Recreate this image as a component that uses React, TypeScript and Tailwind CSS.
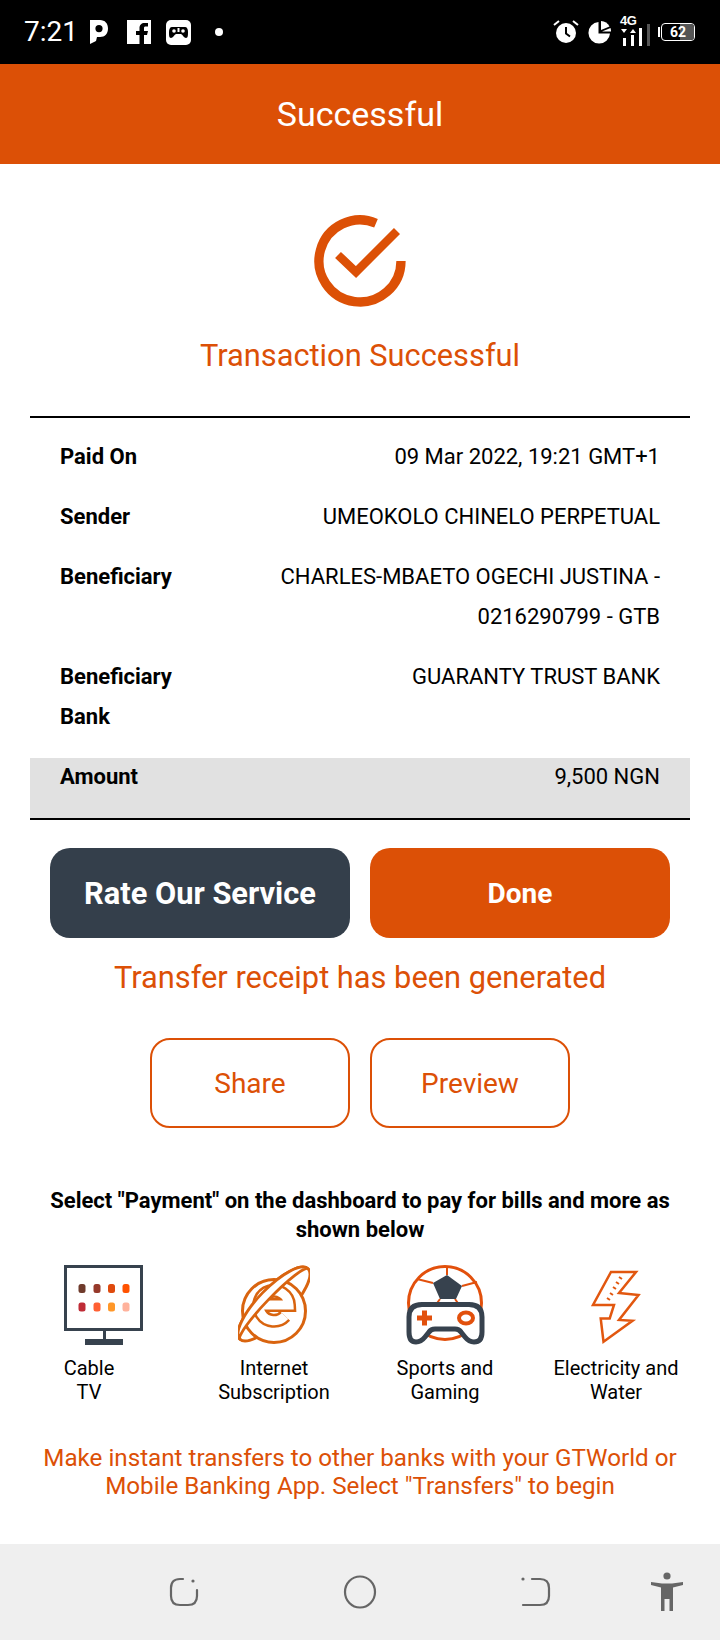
import React from 'react';

const rows = [
  { label: 'Paid On', value: '09 Mar 2022, 19:21 GMT+1' },
  { label: 'Sender', value: 'UMEOKOLO CHINELO PERPETUAL' },
  { label: 'Beneficiary', value: 'CHARLES-MBAETO OGECHI JUSTINA - 0216290799 - GTB' },
  { label: 'Beneficiary Bank', value: 'GUARANTY TRUST BANK' },
];

const StatusBar = () => (
  <div className="h-[64px] bg-black flex items-center pl-[24px] pr-[25px] text-white shrink-0">
    <span className="text-[28px] leading-none w-[66px]">7:21</span>
    <svg width="18" height="24" viewBox="0 0 18 24">
      <path fillRule="evenodd" fill="#fff" d="M0 0H10C15 0 18 3.5 18 8.5S15 17 10 17H7L6 21L0 24ZM9 5A3.6 3.6 0 1 0 9 12.2A3.6 3.6 0 1 0 9 5Z" />
    </svg>
    <svg width="24" height="24" viewBox="0 0 24 24" className="ml-[19px]">
      <path fillRule="evenodd" fill="#fff" d="M0 0H24V24H17V15H20L21 11H17V8C17 7 17.5 6.5 18.5 6.5H21V3H17.5C14.5 3 12.5 5 12.5 8V11H9V15H12.5V24H0Z" />
    </svg>
    <svg width="25" height="25" viewBox="0 0 25 25" className="ml-[15px]">
      <rect width="25" height="25" rx="5" fill="#fff" />
      <path fill="#000" d="M6 7H19C21 7 22 9 22 12C22 15 22 18 20 18C18 18 17 15 15 14H10C8 15 7 18 5 18C3 18 3 15 3 12C3 9 4 7 6 7Z" />
      <circle cx="8" cy="11" r="1.8" fill="#fff" />
      <circle cx="17" cy="11" r="1.8" fill="#fff" />
      <rect x="11.5" y="8" width="2" height="4" fill="#fff" />
    </svg>
    <span className="ml-[24px] w-[8px] h-[8px] rounded-full bg-white" />
    <div className="ml-auto flex items-center">
      <svg width="26" height="26" viewBox="0 0 26 26">
        <circle cx="13" cy="14" r="10" fill="#fff" />
        <path d="M13 8V14.5L17 17.5" fill="none" stroke="#000" strokeWidth="2" />
        <path d="M1 6L6 2M25 6L20 2" stroke="#fff" strokeWidth="2" />
      </svg>
      <svg width="24" height="24" viewBox="0 0 24 24" className="ml-[9px]">
        <path fill="#fff" d="M10.5 2V13.5H22A10.8 10.8 0 1 1 10.5 2Z" />
        <path fill="#fff" d="M13 1A10 10 0 0 1 21.5 6.5L13 10Z" />
        <path fill="#fff" d="M14 11.5L22.5 8A10 10 0 0 1 23 11.5Z" />
      </svg>
      <div className="ml-[8px] w-[39px] h-[28px] relative">
        <span className="absolute left-0 top-[-4px] text-[13px] leading-[13px] font-bold font-['Liberation_Sans',sans-serif] tracking-[-0.5px]">4G</span>
        <svg width="32" height="28" viewBox="0 0 32 28" className="absolute left-0 top-0">
          <path d="M1 11H7L4 15ZM10 15H16L13 11Z" fill="#fff" />
          <rect x="3" y="20" width="3" height="8" fill="#fff" />
          <rect x="11" y="17" width="3" height="11" fill="#fff" />
          <rect x="19" y="10" width="3" height="18" fill="#fff" />
          <rect x="27" y="6" width="3" height="22" fill="#555" />
        </svg>
      </div>
      <span className="w-[2px] h-[10px] bg-white -ml-[1px]" />
      <div className="w-[34px] ml-[1px] h-[18px] rounded-[4px] border-[1.5px] border-white relative overflow-hidden flex items-center justify-center">
        <div className="absolute right-0 top-0 bottom-0 w-[14px] bg-[#555]" />
        <span className="relative text-[14px] leading-none font-bold">62</span>
      </div>
    </div>
  </div>
);

const CheckMark = () => (
  <svg width="100" height="100" viewBox="0 0 100 100">
    <path d="M91 50A41 41 0 1 1 66 12.2" fill="none" stroke="#dc5006" strokeWidth="9.3" />
    <path d="M28 44L46 61L87 20" fill="none" stroke="#dc5006" strokeWidth="8.5" />
  </svg>
);

const TvIcon = () => (
  <svg width="80" height="80" viewBox="0 0 80 80" className="ml-[30px]">
    <rect x="1.5" y="1.5" width="76" height="63" fill="none" stroke="#37424e" strokeWidth="3" />
    <rect x="39" y="65" width="3" height="10" fill="#37424e" />
    <rect x="21" y="74" width="38" height="6" fill="#37424e" />
    <rect x="14.5" y="19" width="7" height="9" rx="2.5" fill="#6f3b2c" />
    <rect x="29.5" y="19" width="7" height="9" rx="2.5" fill="#96392a" />
    <rect x="44" y="19" width="7" height="9" rx="2.5" fill="#df4a0d" />
    <rect x="58.5" y="19" width="7" height="9" rx="2.5" fill="#ff5200" />
    <rect x="14.5" y="37.5" width="7" height="9" rx="2.5" fill="#bf2c36" />
    <rect x="29.5" y="37.5" width="7" height="9" rx="2.5" fill="#ff6033" />
    <rect x="44" y="37.5" width="7" height="9" rx="2.5" fill="#ff9729" />
    <rect x="58.5" y="37.5" width="7" height="9" rx="2.5" fill="#ffb29c" />
  </svg>
);

const IeIcon = () => (
  <svg width="72" height="80" viewBox="0 0 72 80">
    <g transform="rotate(-46 36 39)">
      <ellipse cx="36" cy="39" rx="49" ry="16" fill="none" stroke="#d9640f" strokeWidth="3" />
    </g>
    <circle cx="36" cy="46" r="31.5" fill="#fff" stroke="#d9640f" strokeWidth="3" />
    <path d="M21 40H51A15 15 0 1 0 47 51" fill="none" stroke="#d9640f" strokeWidth="14" />
    <path d="M21 40H51A15 15 0 1 0 47 51" fill="none" stroke="#fff" strokeWidth="9" />
    <g transform="rotate(-46 36 39)">
      <path d="M-13 39A49 16 0 0 1 85 39A49 7 0 0 0 -13 39Z" fill="#fff" stroke="#d9640f" strokeWidth="2.8" strokeLinejoin="round" />
    </g>
  </svg>
);

const GameIcon = () => (
  <svg width="80" height="80" viewBox="0 0 80 80">
    <circle cx="40" cy="38" r="36.5" fill="none" stroke="#e2500c" strokeWidth="3" />
    <path d="M28 18L12 14M57 21L72 17M42 10V2M35 34L30 41M50 34L55 41" stroke="#e2500c" strokeWidth="2" />
    <path d="M42 10L57 21L51 34H35L28 18Z" fill="#37424e" />
    <path d="M17 39.5H64Q77 39.5 77 52V67Q77 77 69 77Q64 77 60 72L56 67Q54 64 50 64H30Q26 64 24 67L20 72Q16 77 11 77Q4 77 4 67V52Q4 39.5 17 39.5Z" fill="#fff" stroke="#37424e" strokeWidth="5" />
    <path d="M12 53H27M19.5 45.5V60.5" stroke="#e2500c" strokeWidth="5" />
    <ellipse cx="61" cy="53" rx="7" ry="5.5" fill="none" stroke="#e2500c" strokeWidth="4" />
  </svg>
);

const BoltIcon = () => (
  <svg width="54" height="80" viewBox="0 0 54 80">
    <path d="M22 7H47L30 28L49.5 30L30 55L43.5 55.7L14.5 76.7L11.7 53.5H20.7L25 40L4 40Z" fill="none" stroke="#e2570f" strokeWidth="2.5" strokeLinejoin="miter" />
    <path d="M30 12L33 14M27 17L30 19M24 22L27 24M21 28L24 30M18 33L21 35" stroke="#e2570f" strokeWidth="2" />
  </svg>
);

const services = [
  { icon: <TvIcon />, lines: ['Cable', 'TV'] },
  { icon: <IeIcon />, lines: ['Internet', 'Subscription'] },
  { icon: <GameIcon />, lines: ['Sports and', 'Gaming'] },
  { icon: <BoltIcon />, lines: ['Electricity and', 'Water'] },
];

const NavBar = () => (
  <div className="h-[96px] bg-[#efefef] flex items-center pl-[168px] shrink-0">
    <svg width="32" height="32" viewBox="0 0 32 32" fill="none" stroke="#666" strokeWidth="2.2" strokeLinecap="round">
      <path d="M15 3H12C6 3 3 6 3 12V20C3 26 6 29 12 29H20C26 29 29 26 29 20V14" />
      <circle cx="25" cy="5" r="1.6" fill="#666" stroke="none" />
    </svg>
    <svg width="34" height="36" viewBox="0 0 34 36" className="ml-[143px]">
      <ellipse cx="17" cy="18" rx="15" ry="15.5" fill="none" stroke="#666" strokeWidth="2.2" />
    </svg>
    <svg width="32" height="32" viewBox="0 0 32 32" fill="none" stroke="#666" strokeWidth="2.2" strokeLinecap="round" className="ml-[143px]">
      <path d="M12 3H20C26 3 29 6 29 12V20C29 26 26 29 20 29H3" />
      <circle cx="3" cy="3" r="1.6" fill="#666" stroke="none" />
    </svg>
    <svg width="34" height="40" viewBox="0 0 34 40" className="ml-[98px]">
      <circle cx="17" cy="4" r="3.6" fill="#666" />
      <path d="M1 10L12 11.5H22L33 10L33 13L23 15.5V26V39H19.5V27H14.5V39H11V26V15.5L1 13Z" fill="#666" />
    </svg>
  </div>
);

export default function App() {
  return (
    <div className="w-[720px] h-[1640px] flex flex-col bg-white text-black font-['Roboto',sans-serif]">
      <StatusBar />
      <header className="h-[100px] bg-[#dc5006] text-white text-[34px] flex items-center justify-center shrink-0">
        Successful
      </header>

      <main className="flex-1 flex flex-col">
        <div className="pt-[47px] flex justify-center">
          <CheckMark />
        </div>
        <h1 className="mt-[25px] text-center text-[30.8px] leading-[40px] text-[#dc5006]">Transaction Successful</h1>

        <div className="mx-[30px] mt-[40px] border-t-2 border-black pt-[19px]">
          <div className="flex flex-col gap-[20px]">
            {rows.map((row) => (
              <div key={row.label} className="flex justify-between px-[30px] text-[22px] leading-[40px]">
                <div className="font-bold w-[130px] shrink-0">{row.label}</div>
                <div className="text-right flex-1">{row.value}</div>
              </div>
            ))}
          </div>
          <div className="mt-[21px] h-[60px] bg-[#e1e1e1] flex justify-between px-[30px] text-[22px] leading-[38px]">
            <span className="font-bold">Amount</span>
            <span>9,500 NGN</span>
          </div>
          <div className="h-[2px] bg-black" />
        </div>

        <div className="mt-[28px] px-[50px] flex gap-[20px]">
          <button className="w-[300px] h-[90px] pt-[2px] rounded-[20px] bg-[#343f4b] text-white text-[30.8px] font-bold">Rate Our Service</button>
          <button className="w-[300px] h-[90px] pt-[2px] rounded-[20px] bg-[#dc5006] text-white text-[28px] font-bold">Done</button>
        </div>

        <p className="mt-[20px] text-center text-[30.8px] leading-[40px] text-[#dc5006]">Transfer receipt has been generated</p>

        <div className="mt-[40px] flex justify-center gap-[20px]">
          <button className="w-[200px] h-[90px] pt-[2px] rounded-[20px] border-2 border-[#dc5006] text-[#dc5006] text-[28px]">Share</button>
          <button className="w-[200px] h-[90px] pt-[2px] rounded-[20px] border-2 border-[#dc5006] text-[#dc5006] text-[28px]">Preview</button>
        </div>

        <p className="mt-[58px] px-[40px] text-center text-[22px] leading-[29px] font-bold">
          Select "Payment" on the dashboard to pay for bills and more as shown below
        </p>

        <div className="mt-[21px] grid grid-cols-[178px_192px_150px_192px]">
          {services.map((s) => (
            <div key={s.lines[0]} className="flex flex-col items-center">
              <div className="h-[80px] flex justify-center">{s.icon}</div>
              <div className="mt-[11px] text-center text-[20px] leading-[24px]">
                {s.lines.map((l) => (
                  <div key={l}>{l}</div>
                ))}
              </div>
            </div>
          ))}
        </div>

        <p className="mt-[40px] px-[30px] text-center text-[24.2px] leading-[28px] text-[#dc5006]">
          Make instant transfers to other banks with your GTWorld or Mobile Banking App. Select "Transfers" to begin
        </p>
      </main>

      <NavBar />
    </div>
  );
}
